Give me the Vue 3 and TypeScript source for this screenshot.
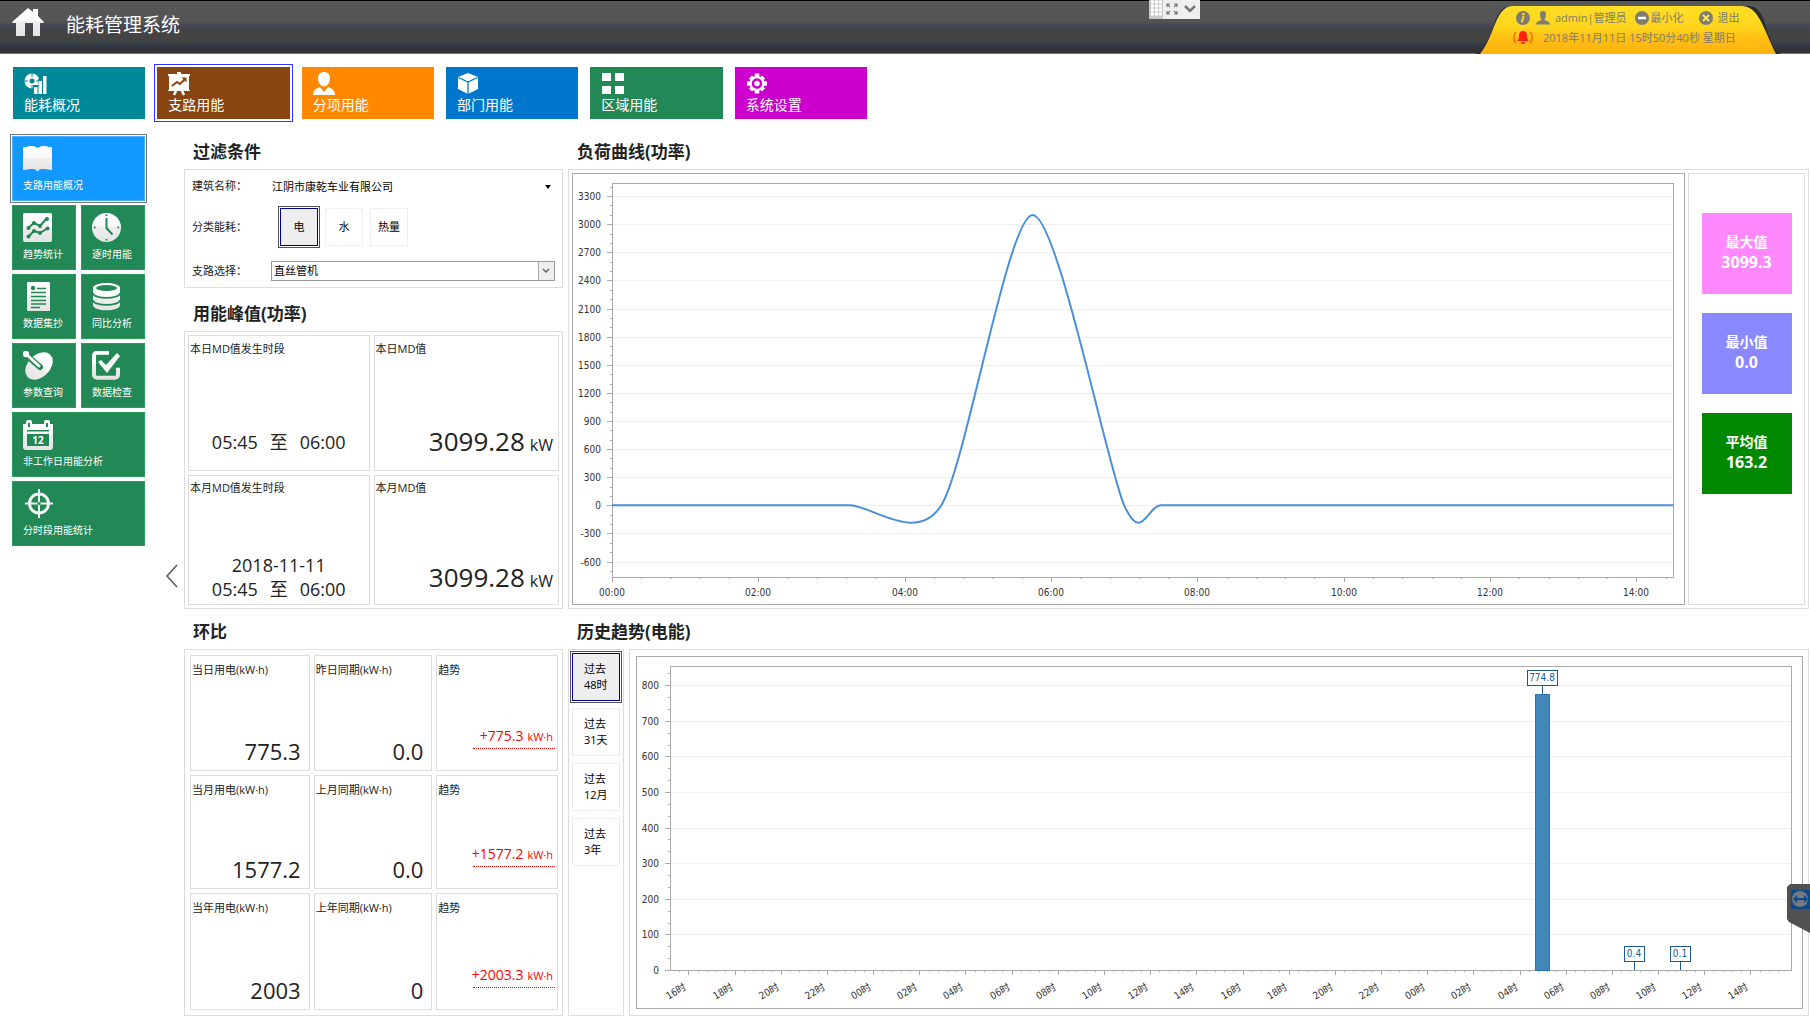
<script setup lang="ts">
import { computed, onBeforeUnmount, onMounted, ref } from 'vue'

interface Tile {
  label: string
  icon: string
  tone: string
}

const icons: Record<string, string> = {
  overview:
    '<circle cx="8" cy="9" r="5" fill="none" stroke="#fff" stroke-width="5"/><path d="M8 0v5M0 9h4M12 9h5M8 13v5" stroke="currentColor" stroke-width="1"/><path d="M9 13h5V7h4V2h6v21H9z" fill="currentColor"/><path d="M10 15h3.500v7H10zM14.500 9h3.500v13h-3.500zM19 4h3.500v18H19z" fill="#fff"/>',
  board:
    '<path d="M9 0h4v2h9v2h-1v14h1v1H0v-1h1V4H0V2h9z" fill="#fff"/><path d="M8 19l-2 4M14 19l2 4" stroke="#fff" stroke-width="2.500"/><path d="M4 14l5-4 3 2 5-5" fill="none" stroke="currentColor" stroke-width="2"/><path d="M13.500 5.500h5v5z" fill="currentColor"/>',
  person:
    '<path d="M11 0c4 0 6 2.500 6 6.500 0 3.500-2.500 8-6 8s-6-4.500-6-8C5 2.500 7 0 11 0z" fill="#fff"/><path d="M0 23c0-4 2-6 7-8l4 5 4-5c5 2 7 4 7 8z" fill="#fff"/>',
  cube:
    '<path d="M11 1l10 4v12l-10 5-10-5V5z" fill="#fff"/><path d="M1.500 5.500L11 10l9.500-4.500M11 10v12" fill="none" stroke="currentColor" stroke-width="1.300"/>',
  grid: '<path d="M1 1h9v8H1zM14 1h9v8h-9zM1 14h9v8H1zM14 14h9v8h-9z" fill="#fff"/>',
  gear:
    '<circle cx="11" cy="11.500" r="7.500" fill="#fff"/><path d="M11 1.500v20M1 11.500h20M4.500 5l13 13M17.500 5l-13 13" stroke="#fff" stroke-width="4.500"/><circle cx="11" cy="11.500" r="4" fill="#fff" stroke="currentColor" stroke-width="2.500"/>',
  book:
    '<path d="M0 3c3 1 4-1 7-1s4 0 7.500 2C18 2 19 2 22 2s4 2 7 1v23c-4 0-5-1-8-1-4 0-4 0-6.500 2.500C12 25 12 25 8 25c-3 0-4 1-8 1z" fill="url(#sheen)"/>',
  trend:
    '<rect width="29" height="29" rx="2" fill="url(#sheen)"/><path d="M5 15l6-5 6 3 7-8M5 24l6-6 6 2 8-5" fill="none" stroke="currentColor" stroke-width="2"/><g fill="currentColor"><circle cx="5.500" cy="15" r="2"/><circle cx="11" cy="10" r="2"/><circle cx="17" cy="13" r="2"/><circle cx="24" cy="6" r="2"/><circle cx="5.500" cy="23.500" r="2"/><circle cx="11" cy="18" r="2"/><circle cx="17" cy="20" r="2"/><circle cx="24.500" cy="15.500" r="2"/></g>',
  clock:
    '<circle cx="14.500" cy="14.500" r="14.500" fill="url(#sheen)"/><path d="M14.500 5v10l6 6.500" fill="none" stroke="currentColor" stroke-width="2"/><path d="M14.500 1.500v1.500M14.500 26v1.500M2 14.500h1.500M25.500 14.500H27" stroke="currentColor" stroke-width="2"/>',
  sheet:
    '<rect x="4" width="23" height="29" rx="1" fill="url(#sheen)"/><circle cx="10" cy="6" r="2.200" fill="currentColor"/><path d="M14 6.500h9M8 10.500h15M8 14.500h15M8 18.500h15M8 22h15M8 25.500h9" stroke="currentColor" stroke-width="1.500"/>',
  database:
    '<path d="M1 6v17c0 7 27 7 27 0V6z" fill="url(#sheen)"/><ellipse cx="14.500" cy="6" rx="13.500" ry="5" fill="#fff"/><ellipse cx="14.500" cy="6" rx="10.500" ry="3" fill="currentColor"/><path d="M1 11c0 6.500 27 6.500 27 0M1 18c0 6.500 27 6.500 27 0" fill="none" stroke="currentColor" stroke-width="1.800"/>',
  dish:
    '<ellipse cx="16" cy="15" rx="11" ry="16" transform="rotate(45 16 15)" fill="url(#sheen)"/><path d="M2 3l15 13" stroke="currentColor" stroke-width="6" stroke-linecap="round"/><path d="M3 3l13 12" stroke="#fff" stroke-width="3" stroke-linecap="round"/><circle cx="3" cy="3" r="3.200" fill="#fff"/>',
  check:
    '<path d="M17 1.800H5a3 3 0 0 0-3 3v19a3 3 0 0 0 3 3h18a3 3 0 0 0 3-3v-7" fill="none" stroke="url(#sheen)" stroke-width="4"/><path d="M6 11l3-2 5 5L25 2l3 3-13 17z" fill="#f8f8f8"/>',
  calendar:
    '<path d="M0 4h3V2c0-3 6-3 6 0v2h12V2c0-3 6-3 6 0v2h3v23a3 3 0 0 1-3 3H3a3 3 0 0 1-3-3z" fill="url(#sheen)"/><path d="M5 3h2v4H5zM23 3h2v4h-2zM4 10h22v1.500H4zM4 14h22v12H4z" fill="currentColor"/><text x="15" y="24" text-anchor="middle" font-size="10" font-weight="700" fill="#fff">12</text>',
  target:
    '<circle cx="16" cy="14.500" r="9.500" fill="none" stroke="#f4f4f4" stroke-width="3"/><path d="M16 0v29M2 14.500h28" stroke="#f4f4f4" stroke-width="2"/><circle cx="16" cy="14.500" r="1.500" fill="currentColor"/>',
}

const modules: Tile[] = [
  { label: '能耗概况', icon: 'overview', tone: 'teal' },
  { label: '支路用能', icon: 'board', tone: 'brown' },
  { label: '分项用能', icon: 'person', tone: 'orange' },
  { label: '部门用能', icon: 'cube', tone: 'blue' },
  { label: '区域用能', icon: 'grid', tone: 'green' },
  { label: '系统设置', icon: 'gear', tone: 'magenta' },
]
const activeModule = ref('支路用能')

const pages: (Tile & { wide: boolean })[] = [
  { label: '支路用能概况', icon: 'book', tone: 'sky', wide: true },
  { label: '趋势统计', icon: 'trend', tone: 'green', wide: false },
  { label: '逐时用能', icon: 'clock', tone: 'green', wide: false },
  { label: '数据集抄', icon: 'sheet', tone: 'green', wide: false },
  { label: '同比分析', icon: 'database', tone: 'green', wide: false },
  { label: '参数查询', icon: 'dish', tone: 'green', wide: false },
  { label: '数据检查', icon: 'check', tone: 'green', wide: false },
  { label: '非工作日用能分析', icon: 'calendar', tone: 'green', wide: true },
  { label: '分时段用能统计', icon: 'target', tone: 'green', wide: true },
]

const energyKinds = ['电', '水', '热量']
const energyKind = ref('电')

const comparisons = [
  { now: '当日用电(kW·h)', value: '775.3', before: '昨日同期(kW·h)', old: '0.0', trend: '+775.3' },
  { now: '当月用电(kW·h)', value: '1577.2', before: '上月同期(kW·h)', old: '0.0', trend: '+1577.2' },
  { now: '当年用电(kW·h)', value: '2003', before: '上年同期(kW·h)', old: '0', trend: '+2003.3' },
]

const stats = [
  { label: '最大值', value: '3099.3', tone: 'pink' },
  { label: '最小值', value: '0.0', tone: 'violet' },
  { label: '平均值', value: '163.2', tone: 'darkgreen' },
]

const ranges = ['48时', '31天', '12月', '3年']
const range = ref('48时')

/* Chart widths follow their frames. */
const loadSvg = ref<SVGSVGElement | null>(null)
const histSvg = ref<SVGSVGElement | null>(null)
const loadWidth = ref(1111)
const histWidth = ref(1165)
let observer: ResizeObserver | undefined

function measure() {
  if (loadSvg.value) loadWidth.value = Math.round(loadSvg.value.getBoundingClientRect().width)
  if (histSvg.value) histWidth.value = Math.round(histSvg.value.getBoundingClientRect().width)
}
onMounted(() => {
  measure()
  observer = new ResizeObserver(measure)
  if (loadSvg.value) observer.observe(loadSvg.value)
  if (histSvg.value) observer.observe(histSvg.value)
})
onBeforeUnmount(() => observer?.disconnect())

/* Load curve */
const LOAD = { left: 39, top: 9, bottom: 403, min: -765, max: 3440, hours: 14.5 }
const loadRight = computed(() => loadWidth.value - 11)
const loadX = (h: number) => LOAD.left + (h / LOAD.hours) * (loadRight.value - LOAD.left)
const loadY = (v: number) => LOAD.bottom - ((v - LOAD.min) / (LOAD.max - LOAD.min)) * (LOAD.bottom - LOAD.top)

const loadMajorY = Array.from({ length: 14 }, (_, i) => -600 + i * 300).map((v) => ({ v, y: Math.round(loadY(v)) }))
const loadMinorY = Array.from({ length: 42 }, (_, i) => -700 + i * 100)
  .filter((v) => v % 300 !== 0)
  .map((v) => Math.round(loadY(v)))
const loadMajorX = computed(() =>
  Array.from({ length: 8 }, (_, i) => ({
    label: String(i * 2).padStart(2, '0') + ':00',
    x: Math.round(loadX(i * 2)),
  })),
)
const loadMinorX = computed(() => Array.from({ length: 37 }, (_, i) => Math.round(loadX(i * 0.4))))

const loadPath = computed(() => {
  const pt = (h: number, v: number) => `${loadX(h).toFixed(1)},${loadY(v).toFixed(1)}`
  return [
    `M${pt(0, 0)} L${pt(3.25, 0)}`,
    `C${pt(3.55, 0)} ${pt(4.164, -417)} ${pt(4.5, 0)}`,
    `C${pt(4.836, 417)} ${pt(5.414, 3099)} ${pt(5.75, 3099)}`,
    `C${pt(6.086, 3099)} ${pt(6.765, 417)} ${pt(7, 0)}`,
    `C${pt(7.235, -417)} ${pt(7.32, 0)} ${pt(7.5, 0)}`,
    `L${pt(14.5, 0)}`,
  ].join(' ')
})

/* History bars */
const HIST = { left: 33, top: 9, bottom: 313, max: 854, lead: 0.4, span: 24.28 }
const histRight = computed(() => histWidth.value - 11)
const histX = (i: number) => HIST.left + ((i + HIST.lead) / HIST.span) * (histRight.value - HIST.left)
const histY = (v: number) => HIST.bottom - (v / HIST.max) * (HIST.bottom - HIST.top)

const histMajorY = Array.from({ length: 9 }, (_, i) => i * 100).map((v) => ({ v, y: Math.round(histY(v)) }))
const histMinorY = Array.from({ length: 25 }, (_, i) => i + 1)
  .filter((i) => i % 3 !== 0)
  .map((i) => Math.round(histY((i * 100) / 3)))
const histMajorX = computed(() =>
  Array.from({ length: 24 }, (_, i) => ({
    label: String((16 + i * 2) % 24).padStart(2, '0') + '时',
    x: Math.round(histX(i)),
  })),
)
const histMinorX = computed(() => Array.from({ length: 120 }, (_, i) => Math.round(histX(i * 0.2 - 0.2))))
const histBars = computed(() =>
  [
    { label: '774.8', value: 774.8, at: 18.5, w: 30 },
    { label: '0.4', value: 0.4, at: 20.5, w: 20 },
    { label: '0.1', value: 0.1, at: 21.5, w: 20 },
  ].map((b) => ({ ...b, x: Math.round(histX(b.at)) - 1, y: Math.round(histY(b.value)) })),
)
</script>

<template>
  <div class="page">
    <svg class="defs" width="0" height="0" aria-hidden="true">
      <defs>
        <linearGradient id="sheen" x1="0" y1="0" x2="0" y2="1">
          <stop offset="0" stop-color="#fff" />
          <stop offset="0.45" stop-color="#fafafa" />
          <stop offset="0.5" stop-color="#eee" />
          <stop offset="1" stop-color="#e4e4e4" />
        </linearGradient>
        <linearGradient id="gold" x1="0" y1="0" x2="0" y2="1">
          <stop offset="0" stop-color="#ffdf26" />
          <stop offset="0.45" stop-color="#ffd41c" />
          <stop offset="0.65" stop-color="#ffc014" />
          <stop offset="1" stop-color="#ffb210" />
        </linearGradient>
      </defs>
    </svg>

    <header class="topbar">
      <svg class="home" viewBox="0 0 32 28" aria-hidden="true">
        <path d="M16 0l5 4V1h5v7l6 6-1 1h-3v13h-7V15h-8v13H4V15H1l-1-1z" fill="url(#sheen)" />
      </svg>
      <h1>能耗管理系统</h1>

      <div class="viewer-bar">
        <svg width="51" height="19" viewBox="0 0 51 19" aria-hidden="true">
          <rect width="51" height="19" fill="#f0f0f0" />
          <rect width="14" height="19" fill="#c8c8c8" />
          <path d="M2 2h11M2 6h11M2 10h11M2 14h11" stroke="#fff" stroke-width="3" stroke-dasharray="3 1" />
          <g fill="none" stroke="#777" stroke-width="1.200">
            <path d="M18 7V4h3M18 4l3 3M28 7V4h-3M28 4l-3 3M18 11v3h3M18 14l3-3M28 11v3h-3M28 14l-3-3" />
          </g>
          <path d="M36 6l5 5 5-5" fill="none" stroke="#777" stroke-width="2.500" />
        </svg>
      </div>

      <div class="account">
        <svg class="account-bg" viewBox="0 0 306 48" preserveAspectRatio="none" aria-hidden="true">
          <path d="M0 48C20 40 16 0 36 0h238c20 0 16 42 32 48z" fill="#2b2d36" />
          <path d="M5 48C20 30 20 0 38 0h228c18 0 22 22 35 48z" fill="url(#gold)" />
        </svg>
        <div class="account-body">
          <div class="account-row">
            <svg width="14" height="14" viewBox="0 0 14 14" aria-hidden="true">
              <circle cx="7" cy="7" r="7" fill="#7d7d72" />
              <path d="M8 3l-1 0M7.500 5.500l-1.500 5" stroke="#ffd820" stroke-width="2" stroke-linecap="round" />
            </svg>
            <svg class="user" width="14" height="14" viewBox="0 0 14 14" aria-hidden="true">
              <path d="M7 0c2.500 0 3 1.500 3 3.500S9 8 8.500 8.500C9 10 14 10 14 13.500H0C0 10 5 10 5.500 8.500 5 8 4 5.500 4 3.500S4.500 0 7 0z" fill="#7d7d72" />
            </svg>
            <span class="user-name">admin|管理员</span>
            <button type="button" class="link minimize">
              <svg width="14" height="14" viewBox="0 0 14 14" aria-hidden="true">
                <circle cx="7" cy="7" r="7" fill="#7d7d72" />
                <path d="M3 7h8" stroke="#fff" stroke-width="2.500" />
              </svg>
              最小化
            </button>
            <button type="button" class="link quit">
              <svg width="14" height="14" viewBox="0 0 14 14" aria-hidden="true">
                <circle cx="7" cy="7" r="7" fill="#7d7d72" />
                <path d="M4 4l6 6M10 4l-6 6" stroke="#ffe860" stroke-width="2" />
              </svg>
              退出
            </button>
          </div>
          <div class="account-row">
            <svg class="bell" width="20" height="14" viewBox="0 0 20 14" aria-hidden="true">
              <path d="M10 0c3 0 4 2 4 5s1 4 2 5H4c1-1 2-2 2-5s1-5 4-5zM8 11h4c0 2.500-4 2.500-4 0z" fill="#f21" />
              <path d="M3 1C0 4 0 9 3 12M17 1c3 3 3 8 0 11" fill="none" stroke="#f60" stroke-width="1.500" />
            </svg>
            <time>2018年11月11日 15时50分40秒 星期日</time>
          </div>
        </div>
      </div>
    </header>

    <nav class="modules" aria-label="模块">
      <button
        v-for="m in modules"
        :key="m.label"
        type="button"
        class="module"
        :class="[m.tone, { active: activeModule === m.label }]"
        @click="activeModule = m.label"
      >
        <svg width="24" height="24" viewBox="0 0 24 24" aria-hidden="true" v-html="icons[m.icon]"></svg>
        <span>{{ m.label }}</span>
      </button>
    </nav>

    <div class="body">
      <nav class="side" aria-label="功能">
        <button
          v-for="p in pages"
          :key="p.label"
          type="button"
          class="side-tile"
          :class="[p.tone, { wide: p.wide }]"
        >
          <svg width="32" height="30" viewBox="0 0 32 30" aria-hidden="true" v-html="icons[p.icon]"></svg>
          <span>{{ p.label }}</span>
        </button>
      </nav>

      <div class="gutter">
        <button type="button" class="collapse" aria-label="收起">
          <svg width="13" height="24" viewBox="0 0 13 24" aria-hidden="true">
            <path d="M12 1L2 12l10 11" fill="none" stroke="#555" stroke-width="1.500" />
          </svg>
        </button>
      </div>

      <main class="content">
        <div class="column">
          <section>
            <h2>过滤条件</h2>
            <div class="panel filter">
              <div class="field">
                <label for="building">建筑名称：</label>
                <div class="select plain">
                  <select id="building">
                    <option>江阴市康乾车业有限公司</option>
                  </select>
                  <svg width="6" height="4" viewBox="0 0 6 4" aria-hidden="true"><path d="M0 0h6L3 4z" /></svg>
                </div>
              </div>
              <div class="field kinds-field">
                <span id="kinds">分类能耗：</span>
                <div class="kinds" role="group" aria-labelledby="kinds">
                  <button
                    v-for="k in energyKinds"
                    :key="k"
                    type="button"
                    class="choice"
                    :class="{ active: energyKind === k }"
                    :aria-pressed="energyKind === k"
                    @click="energyKind = k"
                  >
                    {{ k }}
                  </button>
                </div>
              </div>
              <div class="field branch-field">
                <label for="branch">支路选择：</label>
                <div class="select boxed">
                  <select id="branch">
                    <option>直丝管机</option>
                  </select>
                  <svg width="16" height="18" viewBox="0 0 16 18" aria-hidden="true">
                    <rect width="16" height="18" fill="#eee" />
                    <path d="M0 0v18" stroke="#aaa" stroke-width="2" />
                    <path d="M5 7l3 3 3-3" fill="none" stroke="#666" stroke-width="1.500" />
                  </svg>
                </div>
              </div>
            </div>
          </section>

          <section class="peak-section">
            <h2>用能峰值(功率)</h2>
            <div class="panel peak">
              <div class="cell">
                <span class="caption">本日MD值发生时段</span>
                <div class="period day"><span>05:45</span><span>至</span><span>06:00</span></div>
              </div>
              <div class="cell">
                <span class="caption">本日MD值</span>
                <div class="reading"><b>3099.28</b><i>kW</i></div>
              </div>
              <div class="cell month">
                <span class="caption">本月MD值发生时段</span>
                <div>
                  <div class="period">2018-11-11</div>
                  <div class="period"><span>05:45</span><span>至</span><span>06:00</span></div>
                </div>
              </div>
              <div class="cell month">
                <span class="caption">本月MD值</span>
                <div class="reading"><b>3099.28</b><i>kW</i></div>
              </div>
            </div>
          </section>
        </div>

        <section class="column">
          <h2>负荷曲线(功率)</h2>
          <div class="panel load">
            <div class="frame">
              <svg ref="loadSvg" class="chart load-chart" role="img" aria-label="负荷曲线">
                <g class="gridline">
                  <line v-for="t in loadMajorY" :key="t.v" :x1="LOAD.left" :x2="loadRight" :y1="t.y" :y2="t.y" />
                </g>
                <rect class="plot" :x="LOAD.left" :y="LOAD.top" :width="loadRight - LOAD.left" :height="LOAD.bottom - LOAD.top" />
                <g class="tick">
                  <line v-for="t in loadMajorY" :key="t.v" :x1="LOAD.left - 5" :x2="LOAD.left" :y1="t.y" :y2="t.y" />
                  <line v-for="y in loadMinorY" :key="y" :x1="LOAD.left - 2" :x2="LOAD.left" :y1="y" :y2="y" />
                  <line v-for="t in loadMajorX" :key="t.label" :x1="t.x" :x2="t.x" :y1="LOAD.bottom" :y2="LOAD.bottom + 5" />
                  <line v-for="x in loadMinorX" :key="x" :x1="x" :x2="x" :y1="LOAD.bottom" :y2="LOAD.bottom + 2" />
                </g>
                <g class="axis" text-anchor="end">
                  <text v-for="t in loadMajorY" :key="t.v" :x="LOAD.left - 11" :y="t.y + 4">{{ t.v }}</text>
                </g>
                <g class="axis" text-anchor="middle">
                  <text v-for="t in loadMajorX" :key="t.label" :x="t.x" :y="LOAD.bottom + 19">{{ t.label }}</text>
                </g>
                <path class="curve" :d="loadPath" />
              </svg>
            </div>
            <div class="stats">
              <div v-for="s in stats" :key="s.label" class="stat" :class="s.tone">
                <span>{{ s.label }}</span>
                <b>{{ s.value }}</b>
              </div>
            </div>
          </div>
        </section>

        <section class="column">
          <h2>环比</h2>
          <div class="panel compare">
            <template v-for="c in comparisons" :key="c.now">
              <div class="cell">
                <span class="caption">{{ c.now }}</span>
                <b class="amount">{{ c.value }}</b>
              </div>
              <div class="cell">
                <span class="caption">{{ c.before }}</span>
                <b class="amount">{{ c.old }}</b>
              </div>
              <div class="cell">
                <span class="caption">趋势</span>
                <div class="trend"><b>{{ c.trend }}</b><i>kW·h</i></div>
              </div>
            </template>
          </div>
        </section>

        <section class="column">
          <h2>历史趋势(电能)</h2>
          <div class="history">
            <div class="panel ranges">
              <button
                v-for="r in ranges"
                :key="r"
                type="button"
                class="choice range"
                :class="{ active: range === r }"
                :aria-pressed="range === r"
                @click="range = r"
              >
                <span>过去<br />{{ r }}</span>
              </button>
            </div>
            <div class="panel hist">
              <div class="frame">
                <svg ref="histSvg" class="chart hist-chart" role="img" aria-label="历史趋势">
                  <g class="gridline">
                    <line v-for="t in histMajorY" :key="t.v" :x1="HIST.left" :x2="histRight" :y1="t.y" :y2="t.y" />
                  </g>
                  <rect class="plot" :x="HIST.left" :y="HIST.top" :width="histRight - HIST.left" :height="HIST.bottom - HIST.top" />
                  <g class="tick">
                    <line v-for="t in histMajorY" :key="t.v" :x1="HIST.left - 5" :x2="HIST.left" :y1="t.y" :y2="t.y" />
                    <line v-for="y in histMinorY" :key="y" :x1="HIST.left - 2" :x2="HIST.left" :y1="y" :y2="y" />
                    <line v-for="t in histMajorX" :key="t.x" :x1="t.x" :x2="t.x" :y1="HIST.bottom" :y2="HIST.bottom + 5" />
                    <line v-for="x in histMinorX" :key="x" :x1="x" :x2="x" :y1="HIST.bottom" :y2="HIST.bottom + 2" />
                  </g>
                  <g class="axis" text-anchor="end">
                    <text v-for="t in histMajorY" :key="t.v" :x="HIST.left - 11" :y="t.y + 4">{{ t.v }}</text>
                  </g>
                  <g class="axis hours" text-anchor="end">
                    <text
                      v-for="t in histMajorX"
                      :key="t.x"
                      :transform="`translate(${t.x - 1} ${HIST.bottom + 19}) rotate(-30)`"
                    >{{ t.label }}</text>
                  </g>
                  <g v-for="b in histBars" :key="b.label">
                    <rect v-if="b.value > 1" class="bar" :x="b.x - 7" :y="b.y" width="14" :height="HIST.bottom - b.y" />
                    <line class="leader" :x1="b.x" :x2="b.x" :y1="b.y - 9" :y2="b.y" />
                    <rect class="tag" :x="b.x - b.w / 2" :y="b.y - 24" :width="b.w" height="15" />
                    <text class="tag-text" :x="b.x" :y="b.y - 13" text-anchor="middle">{{ b.label }}</text>
                  </g>
                </svg>
              </div>
            </div>
          </div>
        </section>
      </main>
    </div>

    <svg class="remote" width="23" height="49" viewBox="0 0 23 49" aria-hidden="true">
      <path d="M3 0h20v49L2 38l-2-3V3z" fill="#505052" />
      <rect x="4" y="6" width="19" height="19" fill="#0b4a86" />
      <circle cx="13" cy="15" r="8" fill="#77797c" />
      <path d="M6 15l4-4v3h7v-3l4 4-4 4v-3h-7v3z" fill="#0b4a86" />
    </svg>
  </div>
</template>

<style>
body {
  background: #fff;
}
</style>

<style scoped>
.page {
  position: relative;
  min-height: 100vh;
  color: #222;
  font-family: 'Open Sans', 'Noto Sans CJK SC', sans-serif;
  font-size: 11px;
  line-height: 16px;
}
.page *,
.page *::before {
  box-sizing: border-box;
}
.defs {
  position: absolute;
}
button,
select {
  margin: 0;
  padding: 0;
  border: 0;
  background: none;
  color: inherit;
  font: inherit;
  cursor: pointer;
}
b,
i {
  font-style: normal;
  font-weight: 400;
}

.topbar {
  position: relative;
  display: flex;
  align-items: center;
  height: 54px;
  padding: 0 0 4px 12px;
  background: linear-gradient(
    #000 0 1px,
    #585858 1px,
    #545454 21px,
    #444455 27px,
    #444 33px,
    #434343 40px,
    #374444 43px,
    #333344 47px,
    #333 50px,
    #333 53px,
    #777 53px
  );
}
.home {
  width: 32px;
  height: 28px;
  margin-bottom: 6px;
}
h1 {
  margin: 0 auto 0 22px;
  color: #fff;
  font-size: 19px;
  font-weight: 400;
  line-height: 24px;
}
.viewer-bar {
  position: absolute;
  top: 0;
  right: 610px;
  height: 19px;
}
.account {
  position: absolute;
  right: 29px;
  bottom: 0;
  display: grid;
  width: 306px;
  height: 48px;
}
.account-bg {
  grid-area: 1 / 1;
  width: 100%;
  height: 100%;
}
.account-body {
  grid-area: 1 / 1;
  display: flex;
  flex-direction: column;
  gap: 4px;
  padding: 4px 0 0 41px;
  color: #7d7d72;
}
.account-row {
  display: flex;
  align-items: center;
  height: 16px;
  white-space: nowrap;
}
.user {
  margin: 0 5px 0 6px;
}
.link {
  display: flex;
  align-items: center;
  gap: 2px;
}
.minimize {
  margin-left: 8px;
}
.quit {
  gap: 5px;
  margin-left: 15px;
}
.bell {
  margin: 0 10px 0 -3px;
}

.modules {
  display: grid;
  grid-template-columns: repeat(6, 1fr);
  gap: 12px;
  max-width: 880px;
  padding: 13px 13px 0;
}
.module {
  display: flex;
  flex-direction: column;
  gap: 1px;
  height: 52px;
  padding: 5px 0 0 11px;
  background: var(--tile);
  text-align: left;
}
.module span {
  color: #fff;
  font-size: 14px;
  line-height: 16px;
}
.module svg,
.side-tile svg {
  color: var(--tile);
}
.module.active {
  outline: 1px solid #33f;
  outline-offset: 2px;
}
.teal { --tile: #008899; }
.brown { --tile: #884411; }
.orange { --tile: #ff8800; }
.blue { --tile: #0077cc; }
.green { --tile: #228855; }
.magenta { --tile: #cc00cc; }
.sky { --tile: #1199ff; }

.body {
  display: flex;
  padding: 16px 1px 2px 12px;
}
.side {
  display: grid;
  flex: none;
  grid-template-columns: 1fr 1fr;
  gap: 4px 5px;
  align-content: start;
  width: 133px;
  padding-top: 1px;
}
.side-tile {
  display: flex;
  flex-direction: column;
  gap: 4px;
  height: 65px;
  padding: 7px 0 0 10px;
  border: 1px solid #2a9d5c;
  background: var(--tile);
  text-align: left;
  white-space: nowrap;
}
.side-tile span {
  color: #fff;
  font-size: 10px;
  line-height: 14px;
}
.side-tile.wide {
  grid-column: span 2;
}
.side-tile.sky {
  border-color: #4ab0ff;
  outline: 1px solid #777;
  outline-offset: 1px;
}
.gutter {
  display: flex;
  flex: none;
  align-items: center;
  justify-content: flex-end;
  width: 39px;
  padding-right: 6px;
}
.collapse {
  height: 24px;
}

.content {
  display: grid;
  flex: 1;
  grid-template-columns: 379px minmax(0, 1fr);
  gap: 6px 5px;
  min-width: 0;
}
.column {
  display: flex;
  flex-direction: column;
  min-width: 0;
}
h2 {
  margin: 0;
  padding-left: 9px;
  color: #222;
  font-size: 17px;
  font-weight: 700;
  line-height: 34px;
}
.panel {
  border: 1px solid #ddd;
}
.peak-section {
  margin-top: 9px;
}

.filter {
  display: flex;
  flex-direction: column;
  height: 119px;
  padding: 6px 7px;
}
.field {
  display: flex;
  align-items: center;
  height: 20px;
}
.field > label,
.field > span {
  width: 79px;
}
.kinds-field {
  height: 42px;
  margin-top: 10px;
}
.branch-field {
  margin-top: auto;
}
.kinds {
  display: flex;
  gap: 7px;
  padding-left: 9px;
}
.choice {
  width: 38px;
  height: 38px;
  border: 1px solid #eee;
  color: #000;
}
.choice.active {
  border-color: #008;
  background: #eee;
  outline: 1px solid #555;
  outline-offset: 1px;
}
.select {
  display: grid;
  flex: 1;
  align-items: center;
  color: #000;
}
.select select,
.select svg {
  grid-area: 1 / 1;
}
.select select {
  width: 100%;
  height: 18px;
  appearance: none;
  font-size: 11px;
  line-height: 18px;
}
.select svg {
  justify-self: end;
  pointer-events: none;
}
.plain {
  padding: 1px 4px 0 1px;
}
.boxed {
  border: 1px solid #999;
}
.boxed select {
  padding-left: 2px;
}

.cell {
  display: flex;
  flex-direction: column;
  justify-content: space-between;
  min-width: 0;
  border: 1px solid #ddd;
}
.caption {
  white-space: nowrap;
}
.peak {
  display: grid;
  grid-template-columns: 182fr 186fr;
  grid-template-rows: 136px 130px;
  gap: 4px;
  height: 278px;
  padding: 3px;
}
.peak .cell {
  padding: 5px 1px 10px;
}
.peak .month {
  padding: 4px 1px 3px;
}
.day {
  margin-bottom: 6px;
}
.period {
  display: flex;
  gap: 12px;
  justify-content: center;
  font-size: 18px;
  line-height: 24px;
}
.reading {
  display: flex;
  gap: 5px;
  align-items: baseline;
  justify-content: flex-end;
  padding-right: 4px;
  line-height: 30px;
}
.reading b {
  font-size: 26px;
}
.reading i {
  font-size: 16px;
}
.month .reading {
  margin-bottom: 5px;
}

.compare {
  display: grid;
  grid-template-columns: 120fr 119fr 122fr;
  grid-template-rows: 116fr 114fr 117fr;
  gap: 4px;
  height: 367px;
  padding: 5px 4px 5px 5px;
}
.compare .cell {
  padding: 6px 2px 5px 1px;
}
.amount {
  padding-right: 6px;
  font-size: 22px;
  line-height: 28px;
  text-align: right;
}
.trend {
  display: flex;
  gap: 4px;
  align-items: baseline;
  align-self: flex-end;
  justify-content: flex-end;
  width: 82px;
  margin-bottom: 16px;
  padding-right: 2px;
  border-bottom: 1px dotted #f00;
  color: #f00;
  line-height: 22px;
}
.trend b {
  font-size: 14px;
}
.trend i {
  font-size: 11px;
}

.load {
  display: flex;
  flex: 1;
  gap: 3px;
  padding: 3px;
}
.frame {
  flex: 1;
  min-width: 0;
  border: 1px solid #aaa;
}
.chart {
  display: block;
  width: 100%;
}
.load-chart {
  height: 430px;
}
.hist-chart {
  height: 351px;
}
.gridline line {
  stroke: #eee;
  shape-rendering: crispEdges;
}
.plot {
  fill: none;
  stroke: #aaa;
  shape-rendering: crispEdges;
}
.tick line {
  stroke: #aaa;
  shape-rendering: crispEdges;
}
.axis {
  fill: #333;
  font-family: 'DejaVu Sans Condensed', 'Noto Sans', 'Noto Sans CJK SC', sans-serif;
  font-size: 10px;
}
.curve {
  fill: none;
  stroke: #4a90d9;
  stroke-width: 2;
}
.bar {
  fill: #4488bb;
  stroke: #2f77a8;
  shape-rendering: crispEdges;
}
.leader {
  stroke: #1c5a96;
  shape-rendering: crispEdges;
}
.tag {
  fill: #fff;
  stroke: #1c5a96;
  shape-rendering: crispEdges;
}
.tag-text {
  fill: #1c5a96;
  font-family: 'DejaVu Sans Condensed', 'DejaVu Sans', sans-serif;
  font-size: 10px;
}
.stats {
  display: flex;
  flex: none;
  flex-direction: column;
  gap: 19px;
  align-items: center;
  width: 117px;
  padding-top: 39px;
  border: 1px solid #ddd;
}
.stat {
  display: flex;
  flex-direction: column;
  align-items: center;
  width: 90px;
  height: 81px;
  padding-top: 19px;
  color: #fff;
  font-size: 14px;
  font-weight: 700;
  line-height: 20px;
}
.stat b {
  font-size: 16px;
  font-weight: 700;
}
.pink { background: #ff88ff; }
.violet { background: #8888ff; }
.darkgreen { background: #008800; }

.history {
  display: flex;
  gap: 5px;
}
.ranges {
  display: flex;
  flex: none;
  flex-direction: column;
  gap: 7px;
  align-items: center;
  width: 56px;
  padding-top: 3px;
}
.range {
  display: flex;
  align-items: center;
  width: 48px;
  height: 48px;
  padding-left: 11px;
  text-align: left;
}
.hist {
  display: flex;
  flex: 1;
  min-width: 0;
  padding: 6px 5px 6px 6px;
}

.remote {
  position: absolute;
  top: 884px;
  right: 0;
}
</style>
